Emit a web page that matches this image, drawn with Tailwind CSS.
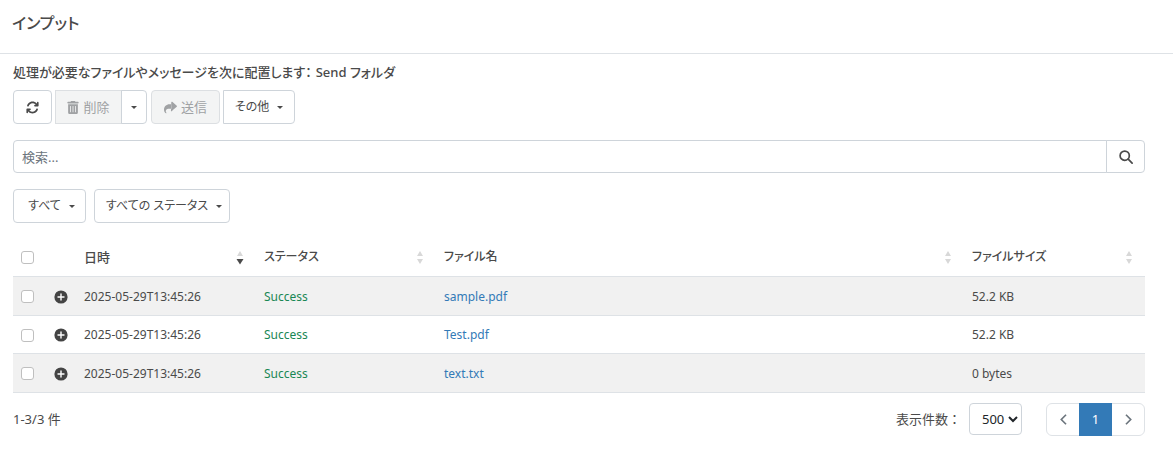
<!DOCTYPE html>
<html lang="ja">
<head>
    <meta charset="UTF-8">
    <meta name="viewport" content="width=device-width, initial-scale=1.0">
    <title>インプット</title>
    <script src="https://cdn.jsdelivr.net/npm/@tailwindcss/browser@4"></script>
</head>
<body class="bg-white text-[13px] leading-5 text-[#4a4a4a] font-['Noto_Sans','Noto_Sans_CJK_JP',sans-serif] [font-feature-settings:'palt']">
    <header class="h-[54px] pl-3 pt-[9px] border-b border-[#dee2e6]">
        <h1 class="text-base leading-7 font-medium">インプット</h1>
    </header>

    <main class="pl-[13px] pr-7 pt-2">
        <p class="font-medium">処理が必要なファイルやメッセージを次に配置します：<span class="ml-1">Send フォルダ</span></p>

        <!-- Toolbar -->
        <div class="flex mt-2 h-[34px] gap-[3px]">
            <button type="button" aria-label="更新" class="w-[39px] flex items-center justify-center border border-[#ced4da] rounded">
                <svg class="w-[13px] h-[13px]" viewBox="0 0 512 512" fill="currentColor"><path d="M105 203c9-25 23-49 43-69 62-62 164-62 226 0l17 18h-39c-18 0-32 14-32 32s14 32 32 32h112c18 0 32-14 32-32V64c0-18-14-32-32-32s-32 14-32 32v43l-13-18C332 2 183 2 95 89c-24 25-42 53-52 84-6 16 3 35 19 41s37-4 43-11zM16 328v120c0 18 14 32 32 32s32-14 32-32v-43l13 18c88 87 237 87 325 0 24-25 42-53 52-84 6-16-3-35-19-41s-37 4-43 11c-9 25-23 49-43 69-62 62-164 62-226 0l-17-18h39c18 0 32-14 32-32s-14-32-32-32H48c-18 0-32 14-32 32z"/></svg>
            </button>
            <div class="flex">
                <button type="button" disabled class="w-[67px] flex items-center justify-center gap-1 bg-[#f3f4f4] border border-[#dcdfe2] text-[#a0a2a4]">
                    <svg class="w-[12px] h-[13px]" viewBox="0 0 448 512"><path fill="currentColor" fill-rule="evenodd" d="M135 18 128 32H32C14 32 0 46 0 64s14 32 32 32h384c18 0 32-14 32-32s-14-32-32-32h-96l-7-14C307 7 296 0 284 0H164c-12 0-23 7-29 18zM32 128h384v320c0 35-29 64-64 64H96c-35 0-64-29-64-64V128zm80 64v240c0 21 32 21 32 0V208c0-21-32-21-32 0zm96 0v240c0 21 32 21 32 0V208c0-21-32-21-32 0zm96 0v240c0 21 32 21 32 0V208c0-21-32-21-32 0z"/></svg>
                    削除
                </button>
                <button type="button" aria-label="削除オプション" class="w-[26px] -ml-px flex items-center justify-center border border-[#ced4da] rounded-r">
                    <svg class="w-[6px] h-[3px]" viewBox="0 0 6 3" fill="currentColor"><path d="M0 0h6L3 3z"/></svg>
                </button>
            </div>
            <button type="button" disabled class="w-[69px] ml-px flex items-center justify-center gap-1 bg-[#f3f4f4] border border-[#dcdfe2] rounded text-[#a0a2a4]">
                <svg class="w-[13px] h-[13px]" viewBox="0 0 512 512" fill="currentColor"><path d="M307 34c12 5 19 17 19 30v64h-114C95 128 0 223 0 340c0 90 57 130 75 141 3 2 5 2 8 2 8 0 15-7 15-15 0-6-4-11-9-15-8-8-19-23-19-51 0-53 43-96 96-96h160v64c0 13-7 24-19 30s-26 2-35-6"/><path d="M326 34 502 184c13 12 13 32 0 44L326 378c-10 9-35 8-35-18V52c0-26 25-27 35-18z"/></svg>
                送信
            </button>
            <button type="button" class="w-[72px] flex items-center justify-center gap-2 border border-[#ced4da] rounded-r text-xs">
                その他
                <svg class="w-[6px] h-[3px]" viewBox="0 0 6 3" fill="currentColor"><path d="M0 0h6L3 3z"/></svg>
            </button>
        </div>

        <!-- Search -->
        <form class="flex mt-4 h-[33px]">
            <input type="text" aria-label="検索" placeholder="検索..." class="flex-1 min-w-0 px-2 border border-[#ced4da] rounded-l placeholder:text-[#6c757d]">
            <button type="submit" aria-label="検索" class="w-[39px] -ml-px flex items-center justify-center border border-[#ced4da] rounded-r">
                <svg class="w-[14px] h-[14px]" viewBox="0 0 14 14" fill="none" stroke="currentColor" stroke-width="1.7" stroke-linecap="round"><circle cx="5.7" cy="5.7" r="4.6"/><path d="m9.2 9.2 3.9 3.9"/></svg>
            </button>
        </form>

        <!-- Filters -->
        <div class="flex mt-4 h-[34px] gap-2 text-xs">
            <button type="button" class="w-[73px] pl-1 flex items-center justify-center gap-2 border border-[#ced4da] rounded">
                すべて
                <svg class="w-[6px] h-[3px]" viewBox="0 0 6 3" fill="currentColor"><path d="M0 0h6L3 3z"/></svg>
            </button>
            <button type="button" class="w-[136px] pl-1 flex items-center justify-center gap-2 border border-[#ced4da] rounded">
                すべての ステータス
                <svg class="w-[6px] h-[3px]" viewBox="0 0 6 3" fill="currentColor"><path d="M0 0h6L3 3z"/></svg>
            </button>
        </div>

        <table class="w-full mt-4 table-fixed border-collapse">
            <colgroup>
                <col class="w-[33px]">
                <col class="w-[30px]">
                <col class="w-[180px]">
                <col class="w-[180px]">
                <col>
                <col class="w-[181px]">
            </colgroup>
            <thead class="text-xs">
                <tr class="h-[37px] border-b border-[#dee2e6] text-left">
                    <th class="pl-2"><input type="checkbox" aria-label="すべて選択" class="block appearance-none size-[13px] bg-white border border-[#bfbfbf] rounded-[3px]"></th>
                    <th></th>
                    <th class="pl-2 pr-3 text-[13px] font-medium">
                        <div class="flex items-center justify-between">日時
                            <svg class="w-2 h-4" viewBox="0 0 8 16"><path fill="#d8d8d8" d="M4 2l3 5H1z"/><path fill="#4a4a4a" d="M.5 10h7L4 15.500z"/></svg>
                        </div>
                    </th>
                    <th class="pl-2 pr-3 font-medium">
                        <div class="flex items-center justify-between">ステータス
                            <svg class="w-2 h-4" viewBox="0 0 8 16" fill="#d8d8d8"><path d="M4 2l3 5H1zM1 10h6l-3 5z"/></svg>
                        </div>
                    </th>
                    <th class="pl-2 pr-3 font-medium">
                        <div class="flex items-center justify-between">ファイル名
                            <svg class="w-2 h-4" viewBox="0 0 8 16" fill="#d8d8d8"><path d="M4 2l3 5H1zM1 10h6l-3 5z"/></svg>
                        </div>
                    </th>
                    <th class="pl-2 pr-3 font-medium">
                        <div class="flex items-center justify-between">ファイルサイズ
                            <svg class="w-2 h-4" viewBox="0 0 8 16" fill="#d8d8d8"><path d="M4 2l3 5H1zM1 10h6l-3 5z"/></svg>
                        </div>
                    </th>
                </tr>
            </thead>
            <tbody class="text-xs [&_td]:pt-0.5">
                <tr class="h-[39px] border-b border-[#dee2e6] bg-[#f1f1f1]">
                    <td class="pl-2"><input type="checkbox" aria-label="sample.pdf を選択" class="block appearance-none size-[13px] bg-white border border-[#bfbfbf] rounded-[3px]"></td>
                    <td class="pl-2"><button type="button" aria-label="詳細" class="block"><svg class="size-[14px]" viewBox="0 0 14 14"><circle cx="7" cy="7" r="6.6" fill="#444"/><path d="M7 4v6M4 7h6" stroke="#fff" stroke-width="1.4" stroke-linecap="round"/></svg></button></td>
                    <td class="pl-2">2025-05-29T13:45:26</td>
                    <td class="pl-2 text-[#198754]">Success</td>
                    <td class="pl-2"><a href="#" class="text-[#337ab7]">sample.pdf</a></td>
                    <td class="pl-2">52.2 KB</td>
                </tr>
                <tr class="h-[38px] border-b border-[#dee2e6]">
                    <td class="pl-2"><input type="checkbox" aria-label="Test.pdf を選択" class="block appearance-none size-[13px] bg-white border border-[#bfbfbf] rounded-[3px]"></td>
                    <td class="pl-2"><button type="button" aria-label="詳細" class="block"><svg class="size-[14px]" viewBox="0 0 14 14"><circle cx="7" cy="7" r="6.6" fill="#444"/><path d="M7 4v6M4 7h6" stroke="#fff" stroke-width="1.4" stroke-linecap="round"/></svg></button></td>
                    <td class="pl-2">2025-05-29T13:45:26</td>
                    <td class="pl-2 text-[#198754]">Success</td>
                    <td class="pl-2"><a href="#" class="text-[#337ab7]">Test.pdf</a></td>
                    <td class="pl-2">52.2 KB</td>
                </tr>
                <tr class="h-[39px] border-b border-[#dee2e6] bg-[#f1f1f1]">
                    <td class="pl-2"><input type="checkbox" aria-label="text.txt を選択" class="block appearance-none size-[13px] bg-white border border-[#bfbfbf] rounded-[3px]"></td>
                    <td class="pl-2"><button type="button" aria-label="詳細" class="block"><svg class="size-[14px]" viewBox="0 0 14 14"><circle cx="7" cy="7" r="6.6" fill="#444"/><path d="M7 4v6M4 7h6" stroke="#fff" stroke-width="1.4" stroke-linecap="round"/></svg></button></td>
                    <td class="pl-2">2025-05-29T13:45:26</td>
                    <td class="pl-2 text-[#198754]">Success</td>
                    <td class="pl-2"><a href="#" class="text-[#337ab7]">text.txt</a></td>
                    <td class="pl-2">0 bytes</td>
                </tr>
            </tbody>
        </table>

        <!-- Paging -->
        <div class="flex items-center mt-[10px]">
            <span>1-3/3 件</span>
            <label for="page-size" class="ml-auto mr-2 [font-feature-settings:normal]">表示件数：</label>
            <select id="page-size" class="w-[53px] h-8 pl-2 border border-[#ced4da] rounded bg-white text-[13px] text-[#212529]">
                <option>500</option>
            </select>
            <nav aria-label="ページ" class="flex ml-6 h-[33px] border border-[#dee2e6] rounded-md">
                <a href="#" aria-label="前へ" class="w-8 flex items-center justify-center"><svg class="w-[7px] h-[11px]" viewBox="0 0 6 10" fill="none" stroke="#6c757d" stroke-width="1.5"><path d="M5.3.7 1 5l4.300 4.300"/></svg></a>
                <a href="#" aria-current="page" class="w-[33px] -my-px flex items-center justify-center bg-[#337ab7] text-white">1</a>
                <a href="#" aria-label="次へ" class="w-8 flex items-center justify-center"><svg class="w-[7px] h-[11px]" viewBox="0 0 6 10" fill="none" stroke="#6c757d" stroke-width="1.5"><path d="M.7.7 5 5 .7 9.300"/></svg></a>
            </nav>
        </div>
    </main>
</body>
</html>
